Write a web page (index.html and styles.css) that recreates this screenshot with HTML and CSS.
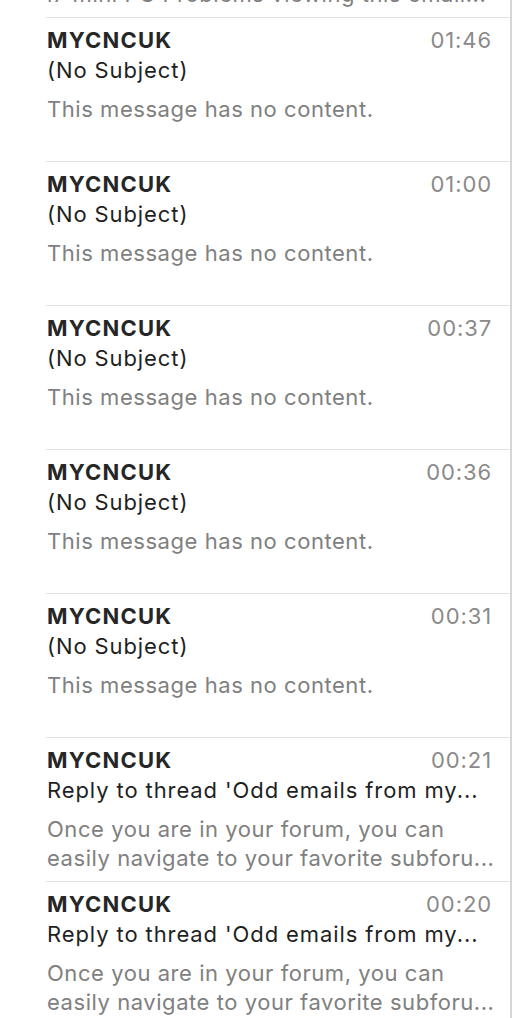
FILE: index.html
```html
<!DOCTYPE html>
<html lang="en">
<head>
  <meta charset="UTF-8">
  <meta name="viewport" content="width=device-width, initial-scale=1.0">
  <title>Inbox</title>
  <link rel="stylesheet" href="styles.css">
</head>
<body>
  <div class="mail-list">
    <div class="messages">
      <!-- row scrolled mostly out of view -->
      <div class="message">
        <div class="message-head">
          <span class="sender">MYCNCUK</span>
          <span class="time">02:14</span>
        </div>
        <div class="subject">Re: i7 mini PC</div>
        <div class="preview">Problems with my new<br>i7 mini PC Problems viewing this email...</div>
      </div>

      <div class="message">
        <div class="message-head">
          <span class="sender">MYCNCUK</span>
          <span class="time">01:46</span>
        </div>
        <div class="subject">(No Subject)</div>
        <div class="preview">This message has no content.</div>
      </div>

      <div class="message">
        <div class="message-head">
          <span class="sender">MYCNCUK</span>
          <span class="time">01:00</span>
        </div>
        <div class="subject">(No Subject)</div>
        <div class="preview">This message has no content.</div>
      </div>

      <div class="message">
        <div class="message-head">
          <span class="sender">MYCNCUK</span>
          <span class="time">00:37</span>
        </div>
        <div class="subject">(No Subject)</div>
        <div class="preview">This message has no content.</div>
      </div>

      <div class="message">
        <div class="message-head">
          <span class="sender">MYCNCUK</span>
          <span class="time">00:36</span>
        </div>
        <div class="subject">(No Subject)</div>
        <div class="preview">This message has no content.</div>
      </div>

      <div class="message">
        <div class="message-head">
          <span class="sender">MYCNCUK</span>
          <span class="time">00:31</span>
        </div>
        <div class="subject">(No Subject)</div>
        <div class="preview">This message has no content.</div>
      </div>

      <div class="message">
        <div class="message-head">
          <span class="sender">MYCNCUK</span>
          <span class="time">00:21</span>
        </div>
        <div class="subject">Reply to thread 'Odd emails from my...</div>
        <div class="preview">Once you are in your forum, you can<br>easily navigate to your favorite subforu...</div>
      </div>

      <div class="message">
        <div class="message-head">
          <span class="sender">MYCNCUK</span>
          <span class="time">00:20</span>
        </div>
        <div class="subject">Reply to thread 'Odd emails from my...</div>
        <div class="preview">Once you are in your forum, you can<br>easily navigate to your favorite subforu...</div>
      </div>
    </div>
  </div>
</body>
</html>
```

FILE: styles.css
```css
* {
  margin: 0;
  padding: 0;
  box-sizing: border-box;
}

body {
  font-family: Inter, "Liberation Sans", sans-serif;
  font-size: 22px;
  letter-spacing: 0.9px;
  background: #fff;
  height: 1018px;
  overflow: hidden;
}

/* list column with its right edge line */
.mail-list {
  width: 512px;
  height: 1018px;
  padding-left: 46px;
  border-right: 2px solid #d6d6d6;
  overflow: hidden;
}

.messages {
  margin-top: -127px;
}

.message {
  height: 144px;
  border-top: 1px solid #e2e2e2;
  padding: 7px 18px 0 1px;
}

.message-head {
  display: flex;
  justify-content: space-between;
  align-items: baseline;
  line-height: 30px;
}

.sender {
  font-weight: 700;
  color: #262626;
  letter-spacing: 1.2px;
}

.time {
  color: #8a8a8a;
}

.subject {
  line-height: 30px;
  color: #1f1f1f;
  white-space: nowrap;
  overflow: hidden;
}

.preview {
  margin-top: 10px;
  margin-right: -10px;
  line-height: 29px;
  color: #808080;
  letter-spacing: 0.55px;
  white-space: nowrap;
  overflow: hidden;
}
```
